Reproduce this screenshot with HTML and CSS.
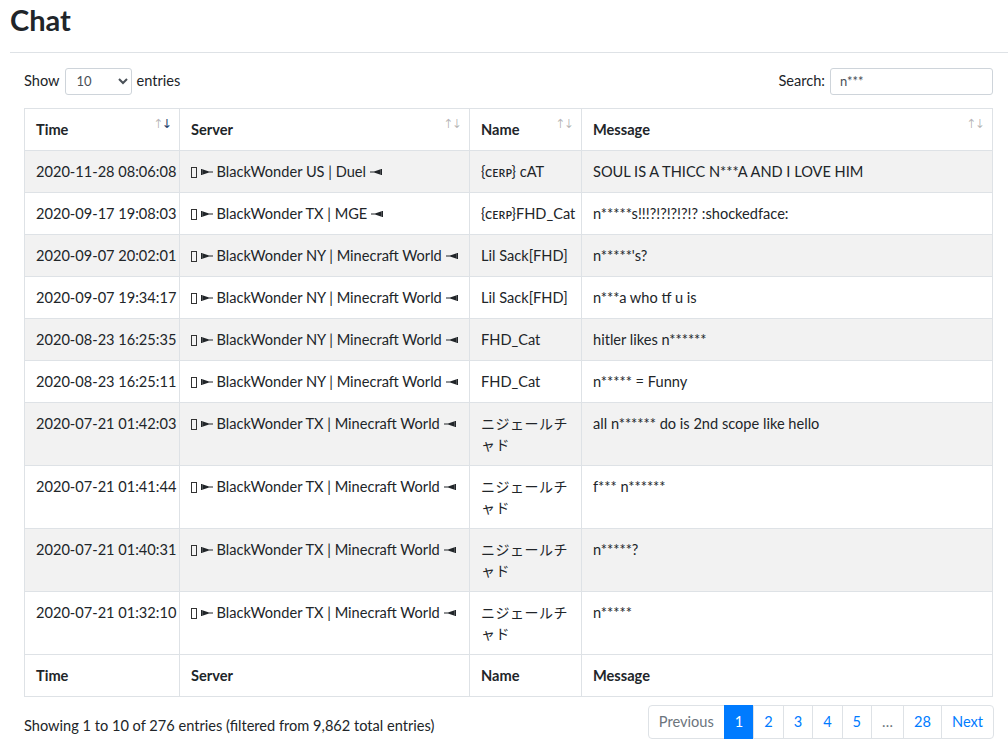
FILE: index.html
```
<!DOCTYPE html>
<html lang="en">
<head>
    <meta charset="UTF-8">
    <title>Chat</title>
    <link rel="stylesheet" href="styles.css">
</head>
<body>
    <div class="wrap">
        <h2 class="title">Chat</h2>
        <hr class="rule">
        <div class="panel">
            <div class="toolbar">
                <label class="length">Show
                    <select class="select-sm">
                        <option>10</option>
                        <option>25</option>
                        <option>50</option>
                        <option>100</option>
                    </select>
                    entries</label>
                <label class="filter">Search: <input type="search" class="input-sm" value="n***"></label>
            </div>

            <table class="chat">
                <colgroup>
                    <col style="width:155px">
                    <col style="width:290px">
                    <col style="width:112px">
                    <col>
                </colgroup>
                <thead>
                    <tr>
                        <th><div class="th-in">Time <span class="sort">↑<b class="on">↓</b></span></div></th>
                        <th><div class="th-in">Server <span class="sort">↑<b>↓</b></span></div></th>
                        <th><div class="th-in">Name <span class="sort">↑<b>↓</b></span></div></th>
                        <th><div class="th-in">Message <span class="sort">↑<b>↓</b></span></div></th>
                    </tr>
                </thead>
                <tbody>
                    <tr>
                        <td class="nw">2020-11-28 08:06:08</td>
                        <td class="nw"><span class="tofu"></span> <svg class="arr" viewBox="0 0 12 8"><rect x="0" y="1" width="1.3" height="6"/><path d="M1.3 1.2 L8 3.4 L12 3.4 L12 4.6 L8 4.6 L1.3 6.8 Z"/></svg> BlackWonder US | Duel <svg class="arr" viewBox="0 0 12 8"><path d="M0 3.4 L4 3.4 L10.7 1.2 L10.7 6.8 L4 4.6 L0 4.6 Z"/><rect x="10.7" y="1" width="1.3" height="6"/></svg></td>
                        <td>{ᴄᴇʀᴘ} cAT</td>
                        <td>SOUL IS A THICC N***A AND I LOVE HIM</td>
                    </tr>
                    <tr>
                        <td class="nw">2020-09-17 19:08:03</td>
                        <td class="nw"><span class="tofu"></span> <svg class="arr" viewBox="0 0 12 8"><rect x="0" y="1" width="1.3" height="6"/><path d="M1.3 1.2 L8 3.4 L12 3.4 L12 4.6 L8 4.6 L1.3 6.8 Z"/></svg> BlackWonder TX | MGE <svg class="arr" viewBox="0 0 12 8"><path d="M0 3.4 L4 3.4 L10.7 1.2 L10.7 6.8 L4 4.6 L0 4.6 Z"/><rect x="10.7" y="1" width="1.3" height="6"/></svg></td>
                        <td class="nw">{ᴄᴇʀᴘ}FHD_Cat</td>
                        <td>n*****s!!!?!?!?!?!? :shockedface:</td>
                    </tr>
                    <tr>
                        <td class="nw">2020-09-07 20:02:01</td>
                        <td class="nw"><span class="tofu"></span> <svg class="arr" viewBox="0 0 12 8"><rect x="0" y="1" width="1.3" height="6"/><path d="M1.3 1.2 L8 3.4 L12 3.4 L12 4.6 L8 4.6 L1.3 6.8 Z"/></svg> BlackWonder NY | Minecraft World <svg class="arr" viewBox="0 0 12 8"><path d="M0 3.4 L4 3.4 L10.7 1.2 L10.7 6.8 L4 4.6 L0 4.6 Z"/><rect x="10.7" y="1" width="1.3" height="6"/></svg></td>
                        <td>Lil Sack[FHD]</td>
                        <td>n*****'s?</td>
                    </tr>
                    <tr>
                        <td class="nw">2020-09-07 19:34:17</td>
                        <td class="nw"><span class="tofu"></span> <svg class="arr" viewBox="0 0 12 8"><rect x="0" y="1" width="1.3" height="6"/><path d="M1.3 1.2 L8 3.4 L12 3.4 L12 4.6 L8 4.6 L1.3 6.8 Z"/></svg> BlackWonder NY | Minecraft World <svg class="arr" viewBox="0 0 12 8"><path d="M0 3.4 L4 3.4 L10.7 1.2 L10.7 6.8 L4 4.6 L0 4.6 Z"/><rect x="10.7" y="1" width="1.3" height="6"/></svg></td>
                        <td>Lil Sack[FHD]</td>
                        <td>n***a who tf u is</td>
                    </tr>
                    <tr>
                        <td class="nw">2020-08-23 16:25:35</td>
                        <td class="nw"><span class="tofu"></span> <svg class="arr" viewBox="0 0 12 8"><rect x="0" y="1" width="1.3" height="6"/><path d="M1.3 1.2 L8 3.4 L12 3.4 L12 4.6 L8 4.6 L1.3 6.8 Z"/></svg> BlackWonder NY | Minecraft World <svg class="arr" viewBox="0 0 12 8"><path d="M0 3.4 L4 3.4 L10.7 1.2 L10.7 6.8 L4 4.6 L0 4.6 Z"/><rect x="10.7" y="1" width="1.3" height="6"/></svg></td>
                        <td>FHD_Cat</td>
                        <td>hitler likes n******</td>
                    </tr>
                    <tr>
                        <td class="nw">2020-08-23 16:25:11</td>
                        <td class="nw"><span class="tofu"></span> <svg class="arr" viewBox="0 0 12 8"><rect x="0" y="1" width="1.3" height="6"/><path d="M1.3 1.2 L8 3.4 L12 3.4 L12 4.6 L8 4.6 L1.3 6.8 Z"/></svg> BlackWonder NY | Minecraft World <svg class="arr" viewBox="0 0 12 8"><path d="M0 3.4 L4 3.4 L10.7 1.2 L10.7 6.8 L4 4.6 L0 4.6 Z"/><rect x="10.7" y="1" width="1.3" height="6"/></svg></td>
                        <td>FHD_Cat</td>
                        <td>n***** = Funny</td>
                    </tr>
                    <tr>
                        <td class="nw">2020-07-21 01:42:03</td>
                        <td class="nw"><span class="tofu"></span> <svg class="arr" viewBox="0 0 12 8"><rect x="0" y="1" width="1.3" height="6"/><path d="M1.3 1.2 L8 3.4 L12 3.4 L12 4.6 L8 4.6 L1.3 6.8 Z"/></svg> BlackWonder TX | Minecraft World <svg class="arr" viewBox="0 0 12 8"><path d="M0 3.4 L4 3.4 L10.7 1.2 L10.7 6.8 L4 4.6 L0 4.6 Z"/><rect x="10.7" y="1" width="1.3" height="6"/></svg></td>
                        <td class="jp">ニジェールチャド</td>
                        <td>all n****** do is 2nd scope like hello</td>
                    </tr>
                    <tr>
                        <td class="nw">2020-07-21 01:41:44</td>
                        <td class="nw"><span class="tofu"></span> <svg class="arr" viewBox="0 0 12 8"><rect x="0" y="1" width="1.3" height="6"/><path d="M1.3 1.2 L8 3.4 L12 3.4 L12 4.6 L8 4.6 L1.3 6.8 Z"/></svg> BlackWonder TX | Minecraft World <svg class="arr" viewBox="0 0 12 8"><path d="M0 3.4 L4 3.4 L10.7 1.2 L10.7 6.8 L4 4.6 L0 4.6 Z"/><rect x="10.7" y="1" width="1.3" height="6"/></svg></td>
                        <td class="jp">ニジェールチャド</td>
                        <td>f*** n******</td>
                    </tr>
                    <tr>
                        <td class="nw">2020-07-21 01:40:31</td>
                        <td class="nw"><span class="tofu"></span> <svg class="arr" viewBox="0 0 12 8"><rect x="0" y="1" width="1.3" height="6"/><path d="M1.3 1.2 L8 3.4 L12 3.4 L12 4.6 L8 4.6 L1.3 6.8 Z"/></svg> BlackWonder TX | Minecraft World <svg class="arr" viewBox="0 0 12 8"><path d="M0 3.4 L4 3.4 L10.7 1.2 L10.7 6.8 L4 4.6 L0 4.6 Z"/><rect x="10.7" y="1" width="1.3" height="6"/></svg></td>
                        <td class="jp">ニジェールチャド</td>
                        <td>n*****?</td>
                    </tr>
                    <tr>
                        <td class="nw">2020-07-21 01:32:10</td>
                        <td class="nw"><span class="tofu"></span> <svg class="arr" viewBox="0 0 12 8"><rect x="0" y="1" width="1.3" height="6"/><path d="M1.3 1.2 L8 3.4 L12 3.4 L12 4.6 L8 4.6 L1.3 6.8 Z"/></svg> BlackWonder TX | Minecraft World <svg class="arr" viewBox="0 0 12 8"><path d="M0 3.4 L4 3.4 L10.7 1.2 L10.7 6.8 L4 4.6 L0 4.6 Z"/><rect x="10.7" y="1" width="1.3" height="6"/></svg></td>
                        <td class="jp">ニジェールチャド</td>
                        <td>n*****</td>
                    </tr>
                </tbody>
                <tfoot>
                    <tr>
                        <th>Time</th>
                        <th>Server</th>
                        <th>Name</th>
                        <th>Message</th>
                    </tr>
                </tfoot>
            </table>

            <div class="footer-bar">
                <div class="info">Showing 1 to 10 of 276 entries (filtered from 9,862 total entries)</div>
                <ul class="pagination">
                    <li class="pg disabled"><a>Previous</a></li>
                    <li class="pg active"><a>1</a></li>
                    <li class="pg"><a>2</a></li>
                    <li class="pg"><a>3</a></li>
                    <li class="pg"><a>4</a></li>
                    <li class="pg"><a>5</a></li>
                    <li class="pg disabled"><a>…</a></li>
                    <li class="pg"><a>28</a></li>
                    <li class="pg"><a>Next</a></li>
                </ul>
            </div>
        </div>
    </div>
</body>
</html>
```

FILE: styles.css
```
html {
    font-size: 14px;
}
body {
    margin: 0;
    font-family: Lato, "Noto Sans", "Noto Sans CJK JP", sans-serif;
    font-size: 14.6px;
    line-height: 1.5;
    color: #212529;
    background: #fff;
}
.wrap {
    padding: 3px 0 0 10px;
}
.title {
    margin: 0 0 14px;
    font-size: 29px;
    font-weight: 700;
    line-height: 1.2;
}
.rule {
    margin: 0;
    border: 0;
    border-top: 1px solid #dee2e6;
}
.panel {
    padding: 15px 15px 0 14px;
}
.toolbar {
    display: flex;
    justify-content: space-between;
    align-items: center;
}
.toolbar label {
    display: flex;
    align-items: center;
    gap: 5px;
}
.select-sm,
.input-sm {
    height: 27px;
    box-sizing: border-box;
    border: 1px solid #ced4da;
    border-radius: 3px;
    font-family: inherit;
    font-size: 13px;
    color: #495057;
    background-color: #fff;
}
.select-sm {
    width: 67px;
    padding: 0 6px 0 7px;
}
.input-sm {
    width: 163px;
    padding: 0 9px;
    outline: none;
}
.chat {
    width: 100%;
    margin-top: 13px;
    table-layout: fixed;
    border-collapse: collapse;
    border: 1px solid #dee2e6;
}
.chat th,
.chat td {
    padding: 10px 11px;
    border: 1px solid #dee2e6;
    text-align: left;
    vertical-align: top;
    line-height: 21px;
}
.chat th {
    font-weight: 700;
}
.nw {
    white-space: nowrap;
}
.th-in {
    display: flex;
    justify-content: space-between;
}
.sort {
    align-self: flex-start;
    margin: -4px -2px 0 0;
    font-family: "DejaVu Sans", sans-serif;
    font-size: 12.5px;
    font-weight: 400;
    line-height: 18px;
    color: rgba(0, 0, 0, .28);
    letter-spacing: -2px;
}
.sort b {
    font-weight: 400;
}
.sort b.on {
    color: #27456e;
}
.chat tbody tr:nth-child(odd) {
    background-color: #f2f2f2;
}
.jp {
    font-family: "Noto Sans CJK JP", sans-serif;
    font-size: 14px;
    letter-spacing: 0.5px;
}
.tofu {
    display: inline-block;
    width: 6px;
    height: 11px;
    border: 1px solid #333;
    vertical-align: -1px;
    box-sizing: border-box;
}
.arr {
    width: 12px;
    height: 8px;
    fill: #212529;
    vertical-align: 1px;
}
.footer-bar {
    display: flex;
    justify-content: space-between;
    align-items: flex-start;
    margin-top: 8px;
}
.info {
    padding-top: 10px;
}
.pagination {
    display: flex;
    margin: 0 -1px 0 0;
    padding: 0;
    list-style: none;
}
.pg a {
    display: block;
    padding: 6px 10px;
    margin-left: -1px;
    line-height: 20px;
    color: #007bff;
    border: 1px solid #dee2e6;
    background: #fff;
}
.pg:first-child a {
    margin-left: 0;
    border-radius: 4px 0 0 4px;
}
.pg:last-child a {
    border-radius: 0 4px 4px 0;
}
.pg.disabled a {
    color: #6c757d;
}
.pg.active a {
    color: #fff;
    background: #007bff;
    border-color: #007bff;
}
```
